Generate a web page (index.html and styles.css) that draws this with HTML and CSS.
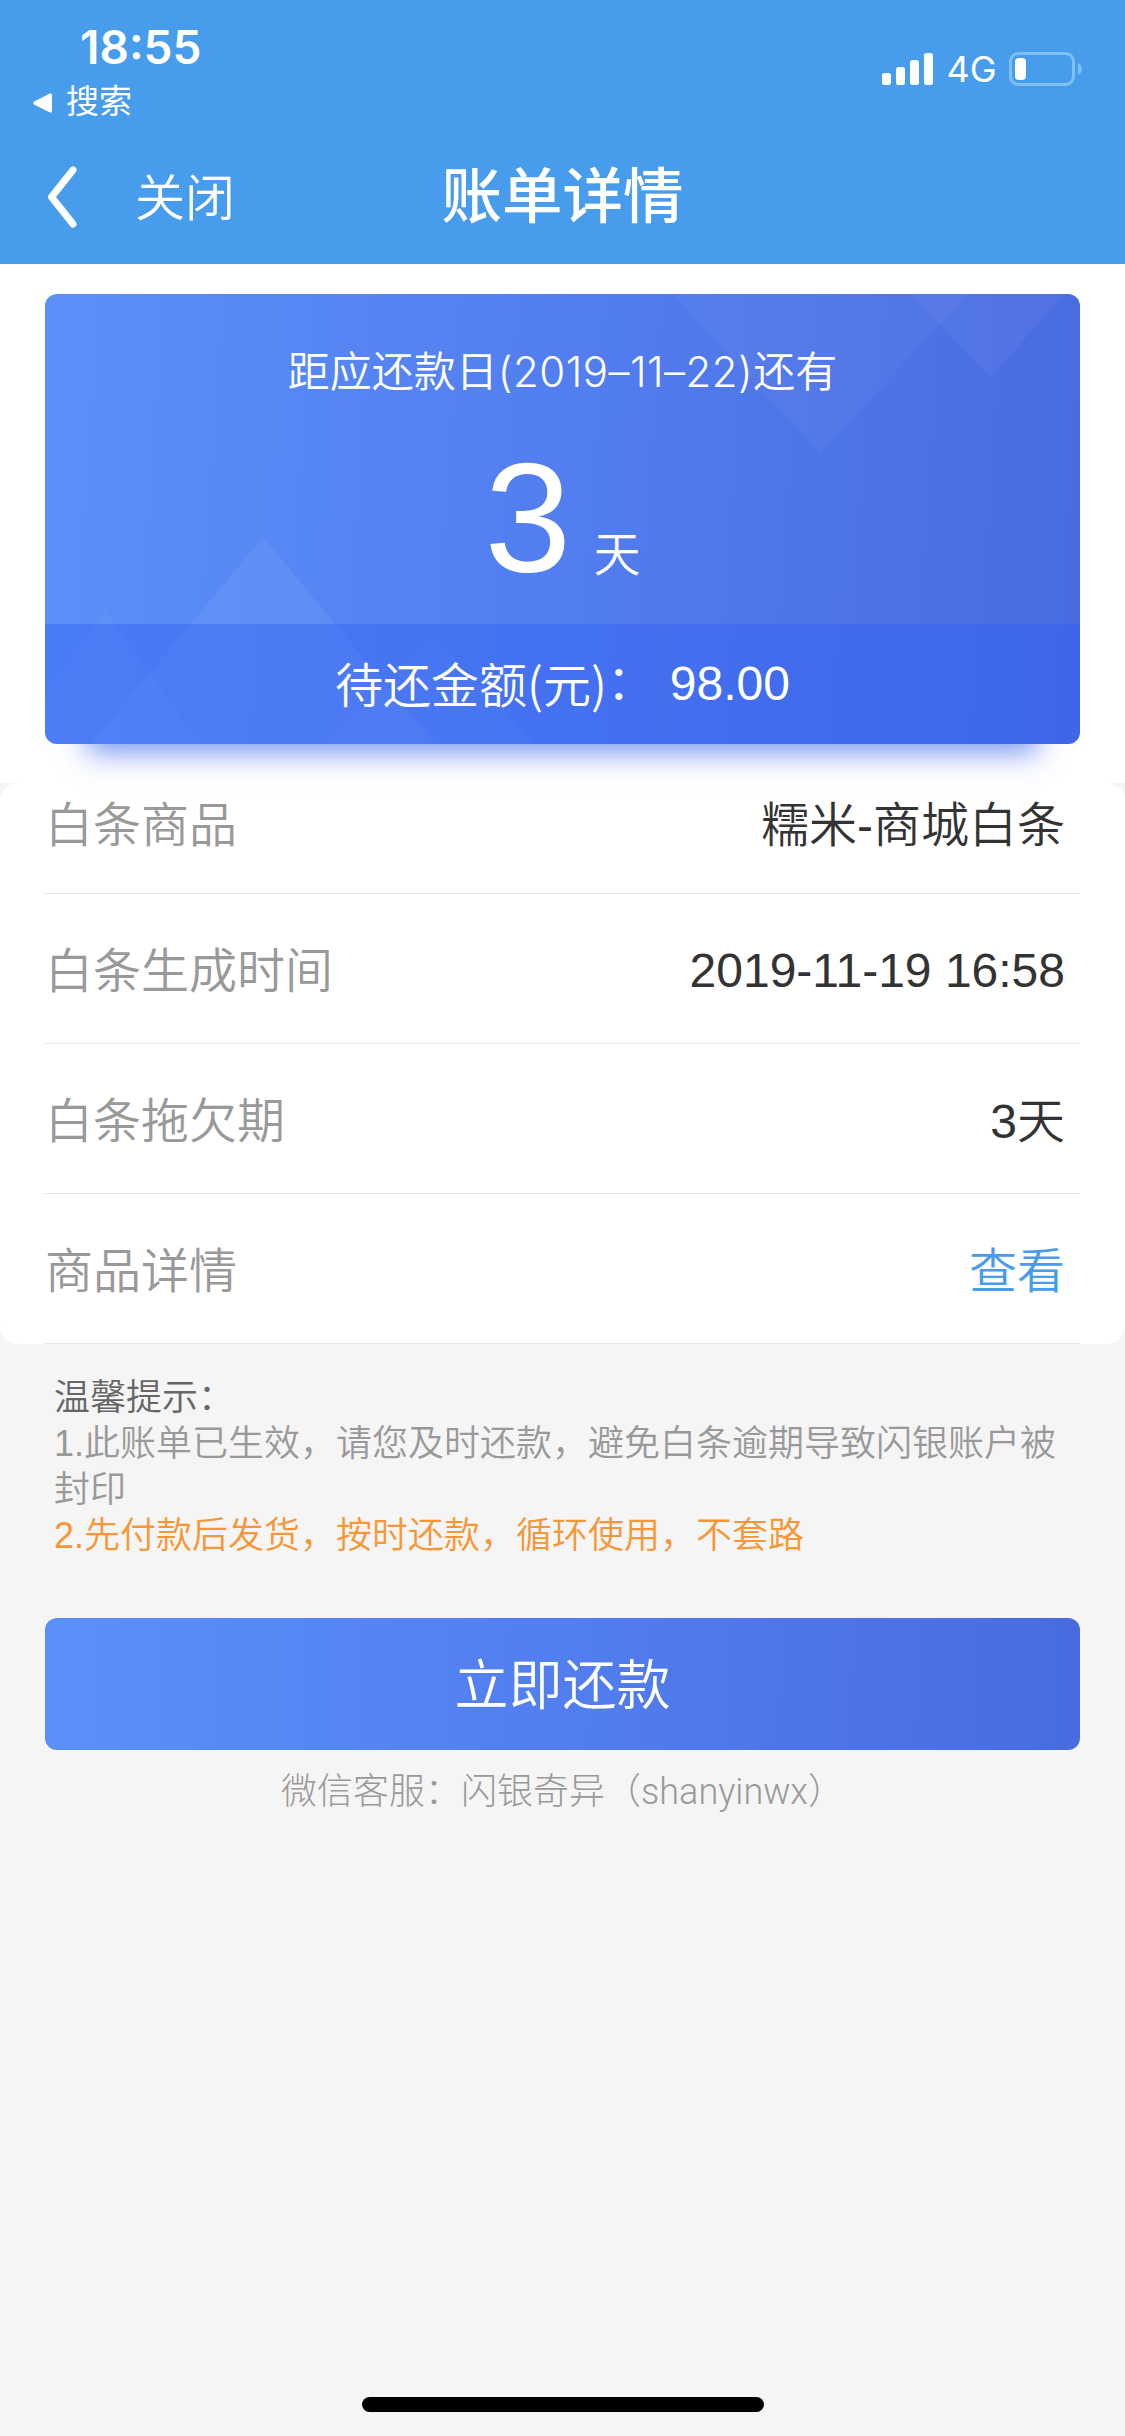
FILE: index.html
```html
<!DOCTYPE html>
<html lang="zh-CN">
<head>
<meta charset="utf-8">
<title>账单详情</title>
<link rel="stylesheet" href="styles.css">
</head>
<body>
<div class="screen">
  <header class="header">
    <div class="status">
      <div class="status-left">
        <div class="clock">18:55</div>
        <div class="return">
          <svg class="return-icon" width="21" height="22" viewBox="0 0 21 22"><path d="M2 9.6 18 1.6Q20 .8 20 3V19Q20 21.2 18 20.4L2 12.4Q.4 11 2 9.6Z" fill="#fff"/></svg>
          <span>搜索</span>
        </div>
      </div>
      <div class="status-right">
        <svg width="52" height="32" viewBox="0 0 52 32" fill="#fff"><rect x="0" y="20" width="9" height="12" rx="2.5"/><rect x="14" y="14" width="9" height="18" rx="2.5"/><rect x="28" y="7" width="9" height="25" rx="2.5"/><rect x="42" y="0" width="9" height="32" rx="2.5"/></svg>
        <span class="network">4G</span>
        <svg width="74" height="34" viewBox="0 0 74 34"><rect x="1.5" y="1.5" width="63" height="31" rx="8" fill="none" stroke="#7fc0f4" stroke-width="3"/><rect x="6" y="6" width="11" height="22" rx="4" fill="#fff"/><path d="M69 11Q73 13 73 17T69 23Z" fill="#7fc0f4"/></svg>
      </div>
    </div>
    <nav class="nav">
      <div class="nav-left">
        <svg class="back-icon" width="30" height="62" viewBox="0 0 30 62"><path d="M26 4 4.5 31 26 58" fill="none" stroke="#fff" stroke-width="7" stroke-linecap="round" stroke-linejoin="round"/></svg>
        <span class="close">关闭</span>
      </div>
      <h1 class="title">账单详情</h1>
      <div></div>
    </nav>
  </header>

  <section class="summary">
    <div class="card">
      <svg class="card-pattern" width="1035" height="450" viewBox="0 0 1035 450" fill="#fff">
        <path d="M628 0H923L775 160Z" fill-opacity=".035"/>
        <path d="M866 0H1020L945 84Z" fill-opacity=".04"/>
        <path d="M218 243 390 450H46Z" fill-opacity=".06"/>
        <path d="M60 317 155 450H0V401Z" fill-opacity=".035"/>
        <path d="M387 341 489 450H282Z" fill-opacity=".04"/>
      </svg>
      <div class="countdown">
        <p class="due">距应还款日<span class="due-date">(2019–11–22)</span>还有</p>
        <p class="days"><span class="days-number">3</span><span class="days-unit">天</span></p>
      </div>
      <div class="amount"><span class="amount-label">待还金额(元)<span class="colon">：</span></span><span class="amount-value">98.00</span></div>
    </div>
  </section>

  <section class="details">
    <div class="row row-first"><span class="label">白条商品</span><span class="value">糯米-商城白条</span></div>
    <div class="row"><span class="label">白条生成时间</span><span class="value value-time">2019-11-19 16:58</span></div>
    <div class="row"><span class="label">白条拖欠期</span><span class="value">3天</span></div>
    <div class="row"><span class="label">商品详情</span><a class="value link">查看</a></div>
  </section>

  <section class="tips">
    <p class="tips-title">温馨提示：</p>
    <p>1.此账单已生效，请您及时还款，避免白条逾期导致闪银账户被封印</p>
    <p class="tips-accent">2.先付款后发货，按时还款，循环使用，不套路</p>
  </section>

  <button class="pay">立即还款</button>
  <p class="service">微信客服：闪银奇异（shanyinwx）</p>
  <div class="home-bar"></div>
</div>
</body>
</html>
```
FILE: styles.css
```css
* { box-sizing: border-box; }
body, p, h1 { margin: 0; }
body {
  background: #f5f5f5;
  font-family: "Liberation Sans", "Noto Sans CJK SC", sans-serif;
  font-weight: 350;
}
.screen {
  width: 1125px;
  height: 2436px;
  display: flex;
  flex-direction: column;
  background: #f5f5f5;
  overflow: hidden;
}

/* Status bar and navigation */
.header { height: 264px; flex: none; background: #479ceb; color: #fff; }
.status { height: 132px; display: flex; justify-content: space-between; }
.status-left { padding: 20px 0 0 32px; }
.clock {
  padding-left: 48px;
  font: 600 46px/54px Inter, sans-serif;
}
.return {
  display: flex;
  align-items: center;
  gap: 13px;
  height: 58px;
  font-size: 33px;
  font-weight: 400;
  line-height: 50px;
}
.return span { padding-bottom: 2px; }
.return-icon { margin-bottom: 1px; }
.status-right { display: flex; align-items: center; height: 34px; margin: 52px 42px 0 0; }
.network { width: 75px; text-align: center; font: 400 36px/34px Inter, sans-serif; }
.nav {
  height: 132px;
  display: grid;
  grid-template-columns: 1fr auto 1fr;
  align-items: center;
}
.nav-left { display: flex; align-items: center; gap: 58px; padding: 2px 0 0 47px; }
.back-icon { margin-bottom: 4px; }
.close { font-size: 50px; line-height: 60px; }
.title { font-size: 60.5px; line-height: 72px; font-weight: 500; padding-bottom: 2px; }

/* Repayment card */
.summary { height: 519px; flex: none; padding: 30px 45px 0; background: #fff; }
.card {
  position: relative;
  height: 450px;
  border-radius: 12px;
  background: linear-gradient(94deg, #5b90f9, #527eef 50%, #496be0);
  box-shadow: 0 50px 28px -42px rgba(66, 108, 236, .75);
  color: #fff;
}
.card-pattern { position: absolute; inset: 0; }
.countdown { position: relative; height: 330px; padding-top: 48px; text-align: center; }
.due { font-size: 42px; line-height: 60px; }
.due-date { font-family: Inter, sans-serif; letter-spacing: .5px; }
.days { display: flex; justify-content: center; align-items: baseline; gap: 22px; padding-top: 24px; line-height: 180px; }
.days-number { font-size: 156px; }
.days-unit { font-size: 47px; }
.amount {
  position: relative;
  height: 120px;
  display: flex;
  justify-content: center;
  align-items: center;
  gap: 15px;
  border-radius: 0 0 12px 12px;
  background: rgba(47, 95, 246, .4);
  font-size: 48px;
}
.amount-label { padding-bottom: 5px; font-family: "Noto Sans CJK SC", sans-serif; }
.amount-value { padding-bottom: 1px; }
.colon { vertical-align: 4px; line-height: 1; }

/* Bill fields */
.details { flex: none; height: 561px; padding: 0 45px; background: #fff; border-radius: 18px; }
.row {
  height: 150px;
  display: flex;
  justify-content: space-between;
  align-items: center;
  padding: 0 15px 4px 0;
  border-bottom: 1px solid #e5e5e5;
  font-size: 48px;
}
.row-first { height: 111px; padding-bottom: 35px; }
.label { color: #999; }
.value { color: #333; }
.value-time { padding-top: 7px; }
.link { color: #479ceb; }

/* Notes */
.tips { flex: none; padding: 31px 54px 0; font-size: 36px; line-height: 46px; color: #999; }
.tips-title { color: #666; }
.tips-accent { color: #f79635; }

.pay {
  flex: none;
  height: 132px;
  margin: 59px 45px 0;
  padding: 0 0 6px;
  border: 0;
  border-radius: 12px;
  background: linear-gradient(92deg, #5b90f9, #527eef 50%, #496be0);
  color: #fff;
  font: inherit;
  font-size: 54px;
}
.service { flex: none; margin-top: 17px; text-align: center; font-family: Roboto, "Noto Sans CJK SC", sans-serif; font-weight: 300; font-size: 36px; line-height: 50px; color: #999; }
.home-bar { flex: none; width: 402px; height: 15px; margin: auto auto 24px; border-radius: 8px; background: #000; }
```
